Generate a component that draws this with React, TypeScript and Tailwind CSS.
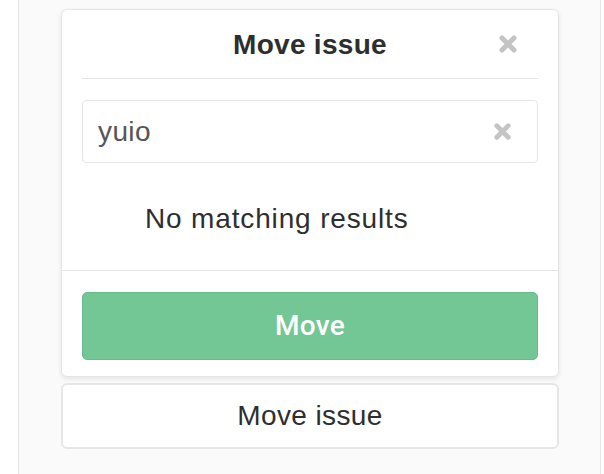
import React from "react";

function TimesIcon({ size = 19, color = "#c4c4c4" }: { size?: number; color?: string }) {
  return (
    <svg width={size} height={size} viewBox="0 0 20 20" aria-hidden="true">
      <path d="M4 4 L16 16 M16 4 L4 16" stroke={color} strokeWidth="5" strokeLinecap="round" />
    </svg>
  );
}

export default function App() {
  return (
    <div
      className="w-[604px] h-[474px] bg-white overflow-hidden"
      style={{ fontFamily: '"Liberation Sans", Arial, sans-serif' }}
    >
      <div className="ml-[18px] w-[583px] h-[474px] border-x border-[#e5e5e5] bg-[#fafafa] pl-[42px] pt-[9px]">
        <div className="w-[498px] bg-white border border-[#e5e5e5] rounded-[6px] shadow-[0_2px_5px_rgba(0,0,0,0.09)]">
          <div className="px-[20px]">
            <div className="h-[69px] grid grid-cols-[1fr_auto_1fr] items-center border-b border-[#e5e5e5]">
              <div />
              <div className="text-[28px] font-bold text-[#2e2e2e] tracking-[0.3px] pt-[1px]">Move issue</div>
              <div className="flex justify-end pr-[20px]">
                <TimesIcon size={20} />
              </div>
            </div>
            <div className="mt-[21px] h-[63px] border border-[#e5e5e5] rounded-[4px] flex items-center justify-between pl-[15px] pr-[25px]">
              <span className="text-[28px] text-[#555555] tracking-[0.4px]">yuio</span>
              <TimesIcon size={19} />
            </div>
            <div className="h-[107px] flex items-center pl-[63px] pt-[4px]">
              <span className="text-[28px] text-[#2e2e2e] tracking-[0.85px]">No matching results</span>
            </div>
          </div>
          <div className="border-t border-[#e5e5e5] px-[20px] pt-[21px] pb-[16px]">
            <div className="h-[68px] rounded-[5px] bg-[#73c795] border border-[#6abb8a] flex items-center justify-center">
              <span className="text-[28px] font-medium text-white font-[Roboto,sans-serif] tracking-[0.3px]">Move</span>
            </div>
          </div>
        </div>
        <div className="mt-[6px] w-[498px] h-[66px] bg-white border-2 border-[#e6e6e6] rounded-[6px] flex items-center justify-center">
          <span className="text-[28px] text-[#2e2e2e] tracking-[0.4px]">Move issue</span>
        </div>
      </div>
    </div>
  );
}
